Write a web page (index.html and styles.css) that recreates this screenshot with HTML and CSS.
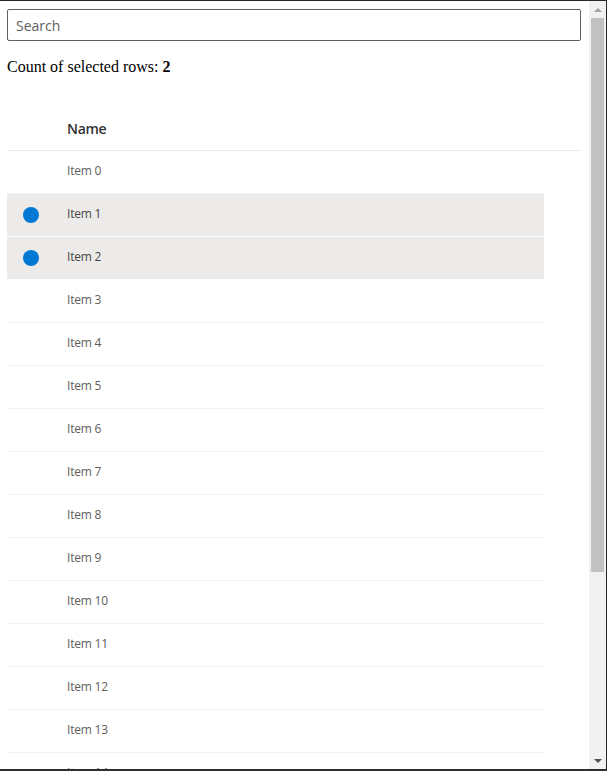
FILE: index.html
```html
<!DOCTYPE html>
<html>
<head>
<meta charset="utf-8">
<link rel="stylesheet" href="styles.css">
</head>
<body>
<div class="frame">
  <div class="main">
    <div class="search"><span class="placeholder">Search</span></div>
    <div class="count">Count of selected rows: <b>2</b></div>
    <div class="list">
      <div class="header">
        <div class="check-cell"></div>
        <div class="name-cell header-name">Name</div>
      </div>
      <div class="rows">
        <div class="row"><div class="check-cell"></div><div class="name-cell">Item 0</div></div>
        <div class="row selected"><div class="check-cell"><span class="dot"></span></div><div class="name-cell">Item 1</div></div>
        <div class="row selected"><div class="check-cell"><span class="dot"></span></div><div class="name-cell">Item 2</div></div>
        <div class="row"><div class="check-cell"></div><div class="name-cell">Item 3</div></div>
        <div class="row"><div class="check-cell"></div><div class="name-cell">Item 4</div></div>
        <div class="row"><div class="check-cell"></div><div class="name-cell">Item 5</div></div>
        <div class="row"><div class="check-cell"></div><div class="name-cell">Item 6</div></div>
        <div class="row"><div class="check-cell"></div><div class="name-cell">Item 7</div></div>
        <div class="row"><div class="check-cell"></div><div class="name-cell">Item 8</div></div>
        <div class="row"><div class="check-cell"></div><div class="name-cell">Item 9</div></div>
        <div class="row"><div class="check-cell"></div><div class="name-cell">Item 10</div></div>
        <div class="row"><div class="check-cell"></div><div class="name-cell">Item 11</div></div>
        <div class="row"><div class="check-cell"></div><div class="name-cell">Item 12</div></div>
        <div class="row"><div class="check-cell"></div><div class="name-cell">Item 13</div></div>
        <div class="row"><div class="check-cell"></div><div class="name-cell">Item 14</div></div>
        <div class="row"><div class="check-cell"></div><div class="name-cell">Item 15</div></div>
      </div>
    </div>
  </div>
  <div class="scrollbar">
    <div class="sb-btn"><span class="arrow-up"></span></div>
    <div class="sb-track"><div class="sb-thumb"></div></div>
    <div class="sb-btn"><span class="arrow-down"></span></div>
  </div>
</div>
</body>
</html>
```

FILE: styles.css
```css
html, body {
  margin: 0;
  padding: 0;
  height: 100%;
  overflow: hidden;
  background: #ffffff;
}
.frame {
  box-sizing: border-box;
  height: 100vh;
  display: flex;
  border-top: 1px solid #262626;
  border-right: 1px solid #262626;
  border-bottom: 2px solid #2e2e2e;
  background: #ffffff;
}
.main {
  flex: 1;
  min-width: 0;
  overflow: hidden;
  padding: 8px 8px 0 7px;
  font-family: "Liberation Serif", serif;
  font-size: 16px;
  color: #000;
}
.search {
  box-sizing: border-box;
  height: 32px;
  border: 1px solid #605e5c;
  border-radius: 2px;
  display: flex;
  align-items: center;
  padding-left: 8px;
  font-family: "Open Sans", sans-serif;
  font-size: 14px;
  color: #605e5c;
}
.count {
  margin: 17px 0 16px;
  line-height: 18px;
}
.list {
  font-family: "Open Sans", sans-serif;
}
.header {
  display: flex;
  padding-top: 16px;
  height: 42px;
  border-bottom: 1px solid #edebe9;
  align-items: center;
}
.header-name {
  font-size: 14px;
  font-weight: 600;
  color: #323130;
  letter-spacing: -0.3px;
  padding-bottom: 2px;
}
.check-cell {
  width: 48px;
  flex: none;
  display: flex;
  align-items: center;
  justify-content: center;
}
.name-cell {
  padding-left: 12px;
}
.row .name-cell {
  padding-bottom: 3px;
}
.rows {
  width: 537px;
}
.row {
  display: flex;
  align-items: center;
  height: 42px;
  border-bottom: 1px solid #f3f2f1;
  font-size: 12px;
  color: #605e5c;
  letter-spacing: -0.2px;
}
.row.selected {
  background: #edebe9;
  border-bottom-color: #ffffff;
  color: #484644;
}
.dot {
  width: 16px;
  height: 16px;
  border-radius: 50%;
  background: #0078d4;
}
.scrollbar {
  width: 17px;
  flex: none;
  display: flex;
  flex-direction: column;
  background: #f1f1f1;
}
.sb-btn {
  height: 17px;
  flex: none;
  display: flex;
  align-items: center;
  justify-content: center;
}
.sb-track {
  flex: 1;
  padding: 0 2px;
}
.sb-thumb {
  height: 554px;
  background: #c1c1c1;
}
.arrow-up {
  width: 0;
  height: 0;
  border-left: 4px solid transparent;
  border-right: 4px solid transparent;
  border-bottom: 4px solid #a3a3a3;
}
.arrow-down {
  width: 0;
  height: 0;
  border-left: 4px solid transparent;
  border-right: 4px solid transparent;
  border-top: 4px solid #505050;
}
```
